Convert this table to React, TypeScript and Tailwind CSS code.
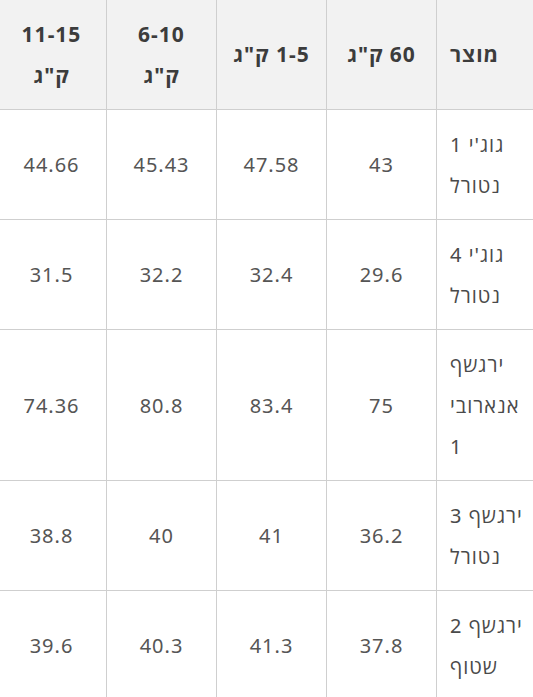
const headers = ["מוצר", "60 ק\"ג", "1-5 ק\"ג", "6-10 ק\"ג", "11-15 ק\"ג"];

const rows = [
  { name: "גוג'י 1 נטורל", values: ["43", "47.58", "45.43", "44.66"] },
  { name: "גוג'י 4 נטורל", values: ["29.6", "32.4", "32.2", "31.5"] },
  { name: "ירגשף אנארובי 1", values: ["75", "83.4", "80.8", "74.36"] },
  { name: "ירגשף 3 נטורל", values: ["36.2", "41", "40", "38.8"] },
  { name: "ירגשף 2 שטוף", values: ["37.8", "41.3", "40.3", "39.6"] },
];

export default function App() {
  return (
    <div
      dir="ltr"
      className="w-[533px] h-[697px] overflow-hidden bg-white"
      style={{ fontFamily: '"Noto Sans", "Open Sans", "DejaVu Sans", sans-serif' }}
    >
      <table dir="rtl" className="-ml-[4px] w-[550px] table-fixed border-collapse">
        <thead>
          <tr className="bg-[#f2f2f2]">
            {headers.map((h, i) => (
              <th
                key={h}
                className={`w-[110px] border-x border-b border-[#cfcfcf] px-[13px] py-[13.5px] text-[21px] leading-[41px] font-bold tracking-[1px] text-[#3c3c3c] ${
                  i === 0 ? "text-left" : "text-center"
                }`}
              >
                {h}
              </th>
            ))}
          </tr>
        </thead>
        <tbody>
          {rows.map((r) => (
            <tr key={r.name}>
              <td className="border-x border-b border-[#cfcfcf] px-[13px] py-[13.5px] text-left text-[20px] leading-[41px] tracking-[1px] text-[#4a4a4a]">
                {r.name}
              </td>
              {r.values.map((v, i) => (
                <td
                  key={i}
                  className="border-x border-b border-[#cfcfcf] px-[13px] py-[13.5px] text-center text-[20px] leading-[41px] tracking-[1px] text-[#555555]"
                >
                  {v}
                </td>
              ))}
            </tr>
          ))}
        </tbody>
      </table>
    </div>
  );
}
